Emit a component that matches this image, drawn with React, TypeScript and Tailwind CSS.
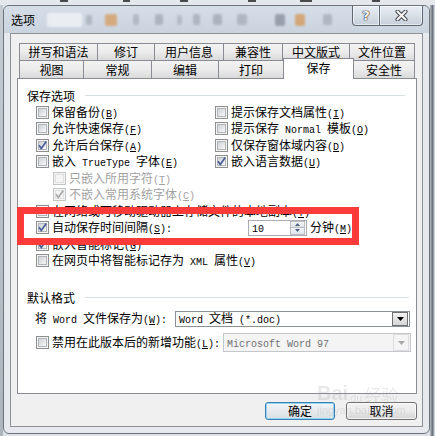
import React from "react";

function Latin({ s }: { s: string }) {
  const parts = s.split(/\(([A-Z])\)/);
  return (
    <span className="font-['Liberation_Mono',monospace] text-[10px]">
      {parts.map((p, i) =>
        i % 2 === 1 ? (
          <span key={i}>
            (<span className="underline underline-offset-[1px]">{p}</span>)
          </span>
        ) : (
          p
        )
      )}
    </span>
  );
}

function Txt({ s }: { s: string }) {
  const parts = s.split(/([\x20-\x7e]+)/).filter(Boolean);
  return (
    <>
      {parts.map((p, i) =>
        /^[\x20-\x7e]/.test(p) ? <Latin key={i} s={p} /> : <span key={i}>{p}</span>
      )}
    </>
  );
}

function Box({ checked, disabled }: { checked?: boolean; disabled?: boolean }) {
  return (
    <span
      className={
        disabled
          ? "relative flex size-[13px] shrink-0 border border-[#c2c4c6] bg-[#f4f4f4] p-[1px]"
          : "relative flex size-[13px] shrink-0 border border-[#8e8f8f] bg-[#f4f4f4] p-[1px]"
      }
    >
      {disabled ? (
        <span className="size-full border border-[#dedfe0] bg-[#f4f4f4]" />
      ) : (
        <span className="size-full border border-[#b1b5ba] bg-linear-to-br from-[#cdd1d6] to-[#f8f8f8]" />
      )}
      {checked && (
        <svg className="absolute left-0 top-0" width="11" height="11" viewBox="0 0 11 11">
          <path
            d="M2 5.2 L4.3 8.6 L9.2 1.6"
            fill="none"
            stroke={disabled ? "#a9a9a9" : "#4a5f97"}
            strokeWidth="1.7"
          />
        </svg>
      )}
    </span>
  );
}

function Opt({
  label,
  checked,
  disabled,
}: {
  label: string;
  checked?: boolean;
  disabled?: boolean;
}) {
  return (
    <div className="flex h-[16.5px] items-center whitespace-pre">
      <Box checked={checked} disabled={disabled} />
      <span className={disabled ? "ml-[3px] text-[#a2a2a2]" : "ml-[3px]"}>
        <Txt s={label} />
      </span>
    </div>
  );
}

function GroupHead({ label, lineMr }: { label: string; lineMr: string }) {
  return (
    <div className="flex h-[17px] items-center pl-[9px]">
      <span>{label}</span>
      <span className={`ml-[10px] h-px flex-1 bg-[#d5dfe5] ${lineMr}`} />
    </div>
  );
}

const row1 = [
  ["拼写和语法", "w-[78px]"],
  ["修订", "w-[57px]"],
  ["用户信息", "w-[69px]"],
  ["兼容性", "w-[59px]"],
  ["中文版式", "w-[67px]"],
  ["文件位置", "w-[66px] border-r"],
];

const row2 = [
  ["视图", "w-[64px]"],
  ["常规", "w-[68px]"],
  ["编辑", "w-[67px]"],
  ["打印", "w-[65px]"],
  ["保存", ""],
  ["安全性", "w-[62px] border-r"],
];

const tabBase =
  "flex shrink-0 items-center justify-center border-l border-t border-[#898c95] bg-linear-to-b from-[#f3f3f3] via-[#ebebeb] to-[#dadada] leading-[16px]";

// blurred toolbar seen through the glass title bar
const blobs = [
  "ml-[12px] w-[35px] h-[14px] bg-[#f1f4f7]",
  "ml-[4px] w-[6px] h-[10px] bg-[#a9b1bb]",
  "ml-[13px] w-[12px] h-[12px] bg-[#d69f66]",
  "ml-[16px] w-[6px] h-[11px] bg-[#aab2bc]",
  "ml-[16px] w-[8px] h-[11px] bg-[#a4acb7]",
  "ml-[14px] w-[5px] h-[10px] bg-[#adb5bf]",
  "ml-[11px] w-[7px] h-[11px] bg-[#a6aeb9]",
  "ml-[13px] w-[9px] h-[11px] bg-[#a3abb6]",
  "ml-[15px] w-[10px] h-[11px] bg-[#a8b0ba]",
  "ml-[28px] w-[10px] h-[12px] bg-[#8a929e]",
  "ml-[10px] w-[10px] h-[12px] bg-[#d49c60]",
  "ml-[18px] w-[9px] h-[11px] bg-[#a8b0ba]",
];

export default function App() {
  return (
    <div className="flex h-[436px] w-[435px] flex-col overflow-hidden bg-[#dde2e8] font-['Noto_Sans_CJK_SC',sans-serif] text-[12px] text-black">
      {/* toolbar edge behind the dialog */}
      <div className="flex h-[5px] shrink-0 items-start bg-[#e4e8ed]">
        <span className="ml-[60px] h-[2px] w-[8px] bg-[#4a4a4a] blur-[0.6px]" />
        <span className="ml-[55px] h-[2px] w-[7px] bg-[#4a4a4a] blur-[0.6px]" />
        <span className="ml-[50px] h-[2px] w-[8px] bg-[#4a4a4a] blur-[0.6px]" />
        <span className="ml-[60px] h-[2px] w-[8px] bg-[#4a4a4a] blur-[0.6px]" />
        <span className="ml-[44px] h-[2px] w-[12px] bg-[#4a4a4a] blur-[0.6px]" />
        <span className="ml-[60px] h-[2px] w-[8px] bg-[#4a4a4a] blur-[0.6px]" />
      </div>

      <div className="flex flex-1">
        <div className="w-[3px] shrink-0 bg-linear-to-b from-[#c5cbd2] to-[#aeb4bb]" />

        {/* dialog */}
        <div className="flex h-[429px] w-[427px] shrink-0 flex-col rounded-[6px] border border-[#6c737d] bg-[#e6eaef]">
          {/* title bar */}
          <div className="flex h-[27px] shrink-0 items-center rounded-t-[6px] bg-linear-to-b from-[#d6dee8] to-[#c9d3de] pl-[7px]">
            <span className="relative z-10 text-[12px]">选项</span>
            {blobs.map((c, i) => (
              <span key={i} className={`${c} rounded-[2px] opacity-80 blur-[1.2px]`} />
            ))}
            <div className="mr-[6px] ml-auto flex self-start">
              <div className="flex h-[20px] w-[28px] items-center justify-center rounded-bl-[4px] border border-t-0 border-[#5f6872] bg-linear-to-b from-[#e9eef3] to-[#c6d0db] shadow-[inset_0_0_0_1px_rgba(255,255,255,0.55)]">
                <span className="font-['DejaVu_Sans',sans-serif] text-[13px] font-bold leading-none text-[#f7f7f7] [text-shadow:0_0_1px_#222,0_0_1px_#222,0_0_1px_#222]">
                  ?
                </span>
              </div>
              <div className="-ml-px flex h-[20px] w-[44px] items-center justify-center rounded-br-[4px] border border-t-0 border-[#5f6872] bg-linear-to-b from-[#e9eef3] to-[#c6d0db] shadow-[inset_0_0_0_1px_rgba(255,255,255,0.55)]">
                <svg width="13" height="11" viewBox="0 0 13 11">
                  <path d="M2.5 1.5 L10.5 9.5 M10.5 1.5 L2.5 9.5" stroke="#3a3f46" strokeWidth="4" strokeLinecap="round" />
                  <path d="M2.5 1.5 L10.5 9.5 M10.5 1.5 L2.5 9.5" stroke="#f6f6f6" strokeWidth="2.2" strokeLinecap="round" />
                </svg>
              </div>
            </div>
          </div>

          {/* client area */}
          <div className="relative mx-[6px] flex h-[394px] flex-col border border-[#8d9299] bg-[#f0f0f0] pt-[9px] pl-[6px]">
            {/* tabs */}
            <div className="ml-[2px] flex h-[17px]">
              {row1.map(([t, w]) => (
                <div key={t} className={`${tabBase} ${w} h-[17px]`}>
                  {t}
                </div>
              ))}
            </div>
            <div className="ml-[2px] flex h-[18px] items-start">
              {row2.map(([t, w]) =>
                t === "保存" ? (
                  <div
                    key={t}
                    className="relative z-10 -mt-[2px] -mr-px flex h-[21px] w-[71px] shrink-0 items-center justify-center border-x border-t border-[#898c95] bg-white pb-[2px] leading-[16px]"
                  >
                    {t}
                  </div>
                ) : (
                  <div key={t} className={`${tabBase} ${w} h-[18px]`}>
                    {t}
                  </div>
                )
              )}
            </div>

            {/* tab page */}
            <div className="relative h-[316px] w-[400px] border border-[#898c95] bg-white">
              <div className="mt-[8px]">
                <GroupHead label="保存选项" lineMr="mr-[11px]" />
              </div>
              <div className="grid grid-cols-[179px_1fr] pl-[18px]">
                <Opt label="保留备份(B)" />
                <Opt label="提示保存文档属性(I)" />
                <Opt label="允许快速保存(F)" />
                <Opt label="提示保存 Normal 模板(O)" />
                <Opt label="允许后台保存(A)" checked />
                <Opt label="仅保存窗体域内容(D)" />
                <Opt label="嵌入 TrueType 字体(E)" />
                <Opt label="嵌入语言数据(U)" checked />
              </div>
              <div className="pl-[35px]">
                <Opt label="只嵌入所用字符(T)" disabled />
                <Opt label="不嵌入常用系统字体(C)" disabled checked />
              </div>
              <div className="pl-[18px]">
                <Opt label="在网络或可移动驱动器上存储文件的本地副本(Y)" />
                <div className="flex h-[16.5px] items-center whitespace-pre">
                  <Box checked />
                  <span className="ml-[3px] w-[196px]">
                    <Txt s="自动保存时间间隔(S):" />
                  </span>
                  <div className="flex h-[16px] w-[59px] items-center border border-[#abadb3] bg-white">
                    <span className="pl-[3px]">
                      <Latin s="10" />
                    </span>
                    <div className="mr-px ml-auto flex h-[14px] w-[15px] flex-col">
                      <div className="flex h-[7px] items-center justify-center border border-[#b9bdc3] bg-linear-to-b from-[#f4f6f8] to-[#dde3ea]">
                        <svg width="5" height="3" viewBox="0 0 5 3">
                          <path d="M0 3 L2.5 0 L5 3 Z" fill="#4d6185" />
                        </svg>
                      </div>
                      <div className="flex h-[7px] items-center justify-center border border-t-0 border-[#b9bdc3] bg-linear-to-b from-[#f4f6f8] to-[#dde3ea]">
                        <svg width="5" height="3" viewBox="0 0 5 3">
                          <path d="M0 0 L2.5 3 L5 0 Z" fill="#4d6185" />
                        </svg>
                      </div>
                    </div>
                  </div>
                  <span className="ml-[3px]">
                    <Txt s="分钟(M)" />
                  </span>
                </div>
                <Opt label="嵌入智能标记(G)" checked />
                <Opt label="在网页中将智能标记存为 XML 属性(V)" />
              </div>

              <div className="mt-[20px]">
                <GroupHead label="默认格式" lineMr="mr-[7px]" />
              </div>
              <div className="mt-[3px] flex items-center whitespace-pre pl-[17px]">
                <span className="w-[140px]">
                  <Txt s="将 Word 文件保存为(W):" />
                </span>
                <div className="flex h-[16px] w-[235px] items-center border border-[#8b9097] bg-white">
                  <span className="pl-[3px]">
                    <Txt s="Word 文档 (*.doc)" />
                  </span>
                  <div className="mr-px ml-auto flex h-[14px] w-[16px] items-center justify-center border border-[#707070] bg-linear-to-b from-[#f3f3f3] to-[#d6d6d6]">
                    <svg width="7" height="4" viewBox="0 0 7 4">
                      <path d="M0 0 L7 0 L3.5 4 Z" fill="#000" />
                    </svg>
                  </div>
                </div>
              </div>
              <div className="mt-[5px] flex items-center whitespace-pre pl-[18px]">
                <Box />
                <span className="ml-[3px] w-[171px]">
                  <Txt s="禁用在此版本后的新增功能(L):" />
                </span>
                <div className="flex h-[19px] w-[188px] items-center border border-[#c3c6ca] bg-[#f4f4f4] text-[#707070]">
                  <span className="pl-[3px]">
                    <Latin s="Microsoft Word 97" />
                  </span>
                  <div className="mr-px ml-auto flex h-[17px] w-[16px] items-center justify-center border border-[#dcdcdc]">
                    <svg width="7" height="4" viewBox="0 0 7 4">
                      <path d="M0 0 L7 0 L3.5 4 Z" fill="#a8a8a8" />
                    </svg>
                  </div>
                </div>
              </div>

              {/* red annotation */}
              <div className="absolute top-[128px] left-[-1px] h-[38px] w-[342px] border-[7px] border-[#fb3a3a]" />
            </div>

            {/* buttons */}
            <div className="mt-[8px] flex w-[400px] justify-end gap-[11px]">
              <button className="flex h-[18px] w-[70px] items-center justify-center rounded-[3px] border border-[#3c7fb1] bg-linear-to-b from-[#f2f5f7] to-[#d9dfe4] leading-none shadow-[inset_0_0_0_1px_#93d7f5]">
                确定
              </button>
              <button className="flex h-[18px] w-[71px] items-center justify-center rounded-[3px] border border-[#707070] bg-linear-to-b from-[#f2f2f2] via-[#ebebeb] to-[#d3d3d3] leading-none shadow-[inset_0_0_0_1px_rgba(255,255,255,0.7)]">
                取消
              </button>
            </div>

            {/* baidu watermark */}
            <div className="pointer-events-none absolute top-[349px] left-[306px] flex flex-col items-start opacity-[0.18]">
              <div className="flex items-end text-[#8a8a8a]">
                <span className="font-['Liberation_Sans',sans-serif] text-[20px] font-bold leading-none">Bai</span>
                <span className="ml-[2px] text-[10px] leading-none">du</span>
                <span className="ml-[2px] text-[17px] leading-none">经验</span>
              </div>
              <span className="font-['Liberation_Sans',sans-serif] text-[11px] leading-[14px] text-[#8a8a8a]">
                jingyan.baidu.com
              </span>
            </div>
          </div>
        </div>

        <div className="flex-1 bg-linear-to-r from-[#b9bdc3] via-[#6d737c] to-[#dfe6f0]" />
      </div>
    </div>
  );
}
